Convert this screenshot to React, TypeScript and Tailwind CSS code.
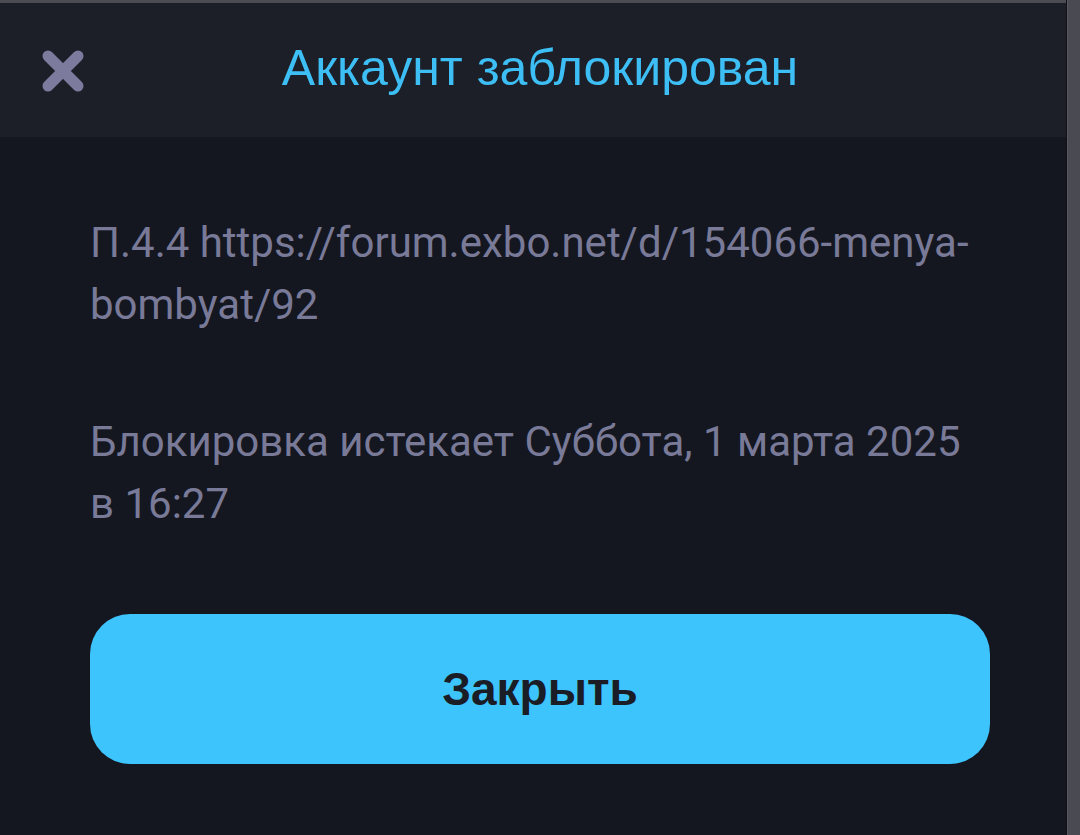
import React from "react";

export default function App() {
  return (
    <div
      className="relative w-[1080px] h-[835px] overflow-hidden bg-[#141720]"
      style={{ fontFamily: "Roboto, 'Noto Sans', sans-serif" }}
    >
      <div className="h-[3px] bg-[#4b4c53]" />
      <div className="relative h-[134px] bg-[#1c1f28] flex items-center justify-center">
        <button className="absolute left-[41px] top-[46px] w-[44px] h-[44px] flex items-center justify-center">
          <svg width="44" height="44" viewBox="0 0 44 44">
            <path
              d="M7 7 L37 37 M37 7 L7 37"
              stroke="#7c7b9d"
              strokeWidth="11"
              strokeLinecap="round"
            />
          </svg>
        </button>
        <h1
          className="text-[50px] leading-none text-[#3dbef5] mt-[-4px]"
          style={{ fontFamily: "'Liberation Sans', Arial, sans-serif" }}
        >
          Аккаунт заблокирован
        </h1>
      </div>
      <div className="px-[90px] pt-[75px]">
        <p className="text-[42px] leading-[62px] text-[#797a98]">
          П.4.4 https://forum.exbo.net/d/154066-menya-bombyat/92
        </p>
        <p className="mt-[75px] text-[42px] leading-[62px] text-[#797a98]">
          Блокировка истекает Суббота, 1 марта 2025 в 16:27
        </p>
        <button
          className="mt-[79px] w-full h-[150px] rounded-[40px] bg-[#3ec4fc] flex items-center justify-center text-[46px] font-bold text-[#1a1d26]"
          style={{ fontFamily: "'Liberation Sans', Arial, sans-serif" }}
        >
          Закрыть
        </button>
      </div>
      <div className="absolute top-0 right-0 bottom-0 w-[14px] flex">
        <div className="w-[1px] bg-[#0e1016]" />
        <div className="w-[1px] bg-[#5a5b62]" />
        <div className="flex-1 bg-[#4a4b52]" />
      </div>
    </div>
  );
}
